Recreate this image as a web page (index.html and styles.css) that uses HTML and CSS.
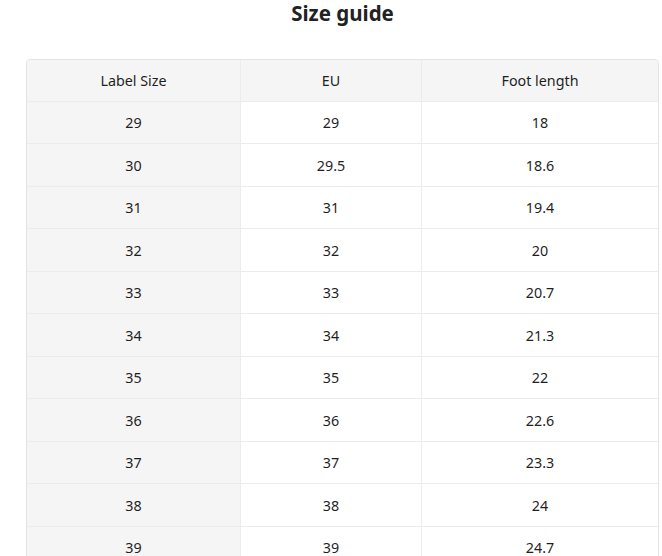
FILE: index.html
```html
<!DOCTYPE html>
<html>
<head>
<meta charset="utf-8">
<link rel="stylesheet" href="styles.css">
</head>
<body>
<div class="page">
  <h1 class="title">Size guide</h1>
  <div class="table-wrap">
    <table class="size-table">
      <thead>
        <tr><th class="c1">Label Size</th><th class="c2">EU</th><th class="c3">Foot length</th></tr>
      </thead>
      <tbody>
        <tr><td class="c1">29</td><td>29</td><td>18</td></tr>
        <tr><td class="c1">30</td><td>29.5</td><td>18.6</td></tr>
        <tr><td class="c1">31</td><td>31</td><td>19.4</td></tr>
        <tr><td class="c1">32</td><td>32</td><td>20</td></tr>
        <tr><td class="c1">33</td><td>33</td><td>20.7</td></tr>
        <tr><td class="c1">34</td><td>34</td><td>21.3</td></tr>
        <tr><td class="c1">35</td><td>35</td><td>22</td></tr>
        <tr><td class="c1">36</td><td>36</td><td>22.6</td></tr>
        <tr><td class="c1">37</td><td>37</td><td>23.3</td></tr>
        <tr><td class="c1">38</td><td>38</td><td>24</td></tr>
        <tr><td class="c1">39</td><td>39</td><td>24.7</td></tr>
      </tbody>
    </table>
  </div>
</div>
</body>
</html>
```
FILE: styles.css
```css
html, body {
  margin: 0;
  padding: 0;
  background: #fff;
}
body {
  font-family: "Noto Sans", "Open Sans", sans-serif;
  color: #1f1f1f;
}
.page {
  padding: 0 3px 0 26px;
}
.title {
  margin: 0;
  padding-top: 0;
  font-size: 20.5px;
  line-height: 26px;
  font-weight: 700;
  text-align: center;
  color: #222;
  height: 59px;
  box-sizing: border-box;
}
.table-wrap {
  border: 1px solid #e3e3e3;
  border-radius: 4px 4px 0 0;
  overflow: hidden;
}
.size-table {
  width: 100%;
  border-collapse: collapse;
  table-layout: fixed;
  font-size: 14.3px;
}
.size-table th,
.size-table td {
  font-weight: 400;
  text-align: center;
  padding: 11.5px 0 9.5px;
  line-height: 20.5px;
  border-left: 1px solid #ececec;
  border-top: 1px solid #ececec;
}
.size-table tr > :first-child {
  border-left: none;
}
.size-table thead th {
  border-top: none;
  background: #f5f5f5;
  padding: 11px 0 9px;
}
.size-table .c1 {
  background: #f5f5f5;
  width: 213px;
}
.size-table th.c2 {
  width: 180px;
}
```
